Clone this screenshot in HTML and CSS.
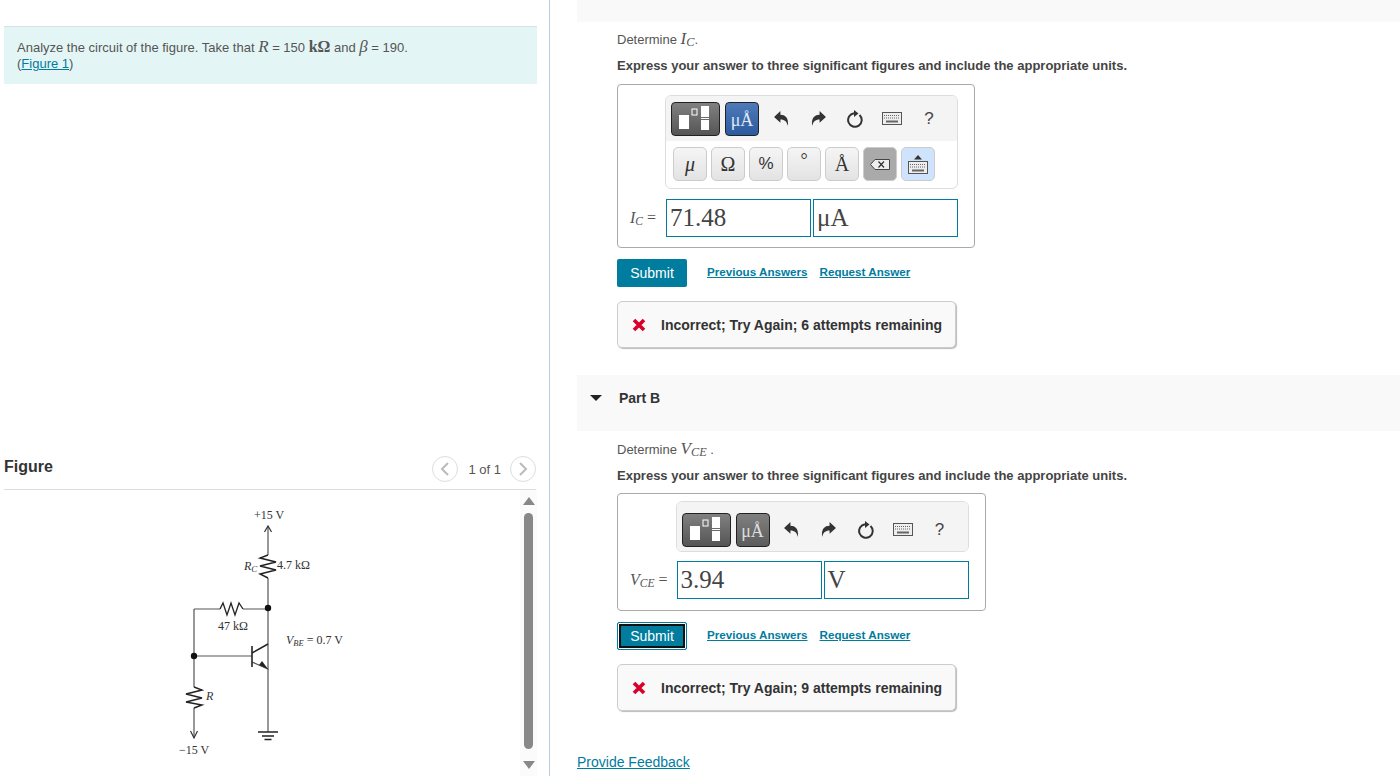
FILE: index.html
```html
<!DOCTYPE html>
<html lang="en">
<head>
  <meta charset="UTF-8" />
  <title>Circuit problem</title>
  <link rel="stylesheet" href="styles.css">
</head>
<body>
  <svg class="defs" width="0" height="0">
    <symbol id="tpl" viewBox="0 0 47 32">
      <rect x="7" y="12" width="10" height="14" fill="#fff"/>
      <rect x="20" y="6" width="5" height="6" fill="none" stroke="#fff"/>
      <rect x="29" y="3" width="8" height="11" fill="#fff"/>
      <rect x="29" y="15" width="8" height="1" fill="#fff"/>
      <rect x="29" y="17" width="8" height="10" fill="#fff"/>
    </symbol>
    <symbol id="undo" viewBox="0 0 16 16">
      <path d="M1 6.500 7 1V4.500C11.500 4.500 15 7.500 14 15C13 11 11 9 7 9V12Z" fill="#333"/>
    </symbol>
    <symbol id="redo" viewBox="0 0 16 16">
      <path d="M15 6.500 9 1V4.500C4.500 4.500 1 7.500 2 15C3 11 5 9 9 9V12Z" fill="#333"/>
    </symbol>
    <symbol id="reset" viewBox="0 0 18 18">
      <path d="M13.500 5A6.800 6.800 0 1 1 8 3.300" fill="none" stroke="#333" stroke-width="2"/>
      <path d="M8 0V7L12.500 3.500Z" fill="#333"/>
    </symbol>
    <symbol id="keyboard" viewBox="0 0 20 13">
      <rect x="0.5" y="0.5" width="19" height="12" fill="#eee" stroke="#555"/>
      <path d="M2 3.500H18M2 6H18" stroke="#666" stroke-dasharray="1 1"/>
      <path d="M4 9.500H16" stroke="#666" stroke-width="2"/>
    </symbol>
    <symbol id="cross" viewBox="0 0 14 14">
      <path d="M2 2 12 12M12 2 2 12" stroke="#d9002a" stroke-width="3.600"/>
    </symbol>
  </svg>

  <div class="left-pane">
    <div class="intro">
      Analyze the circuit of the figure. Take that <i class="math big">R</i> = 150 <span class="math big unit">kΩ</span> and <i class="math big">β</i> = 190.<br>
      (<a href="#">Figure 1</a>)
    </div>

    <div class="figure-head">
      <h3>Figure</h3>
      <div class="pager">
        <span class="circle"><svg width="10" height="14" viewBox="0 0 10 14"><path d="M8 1 2 7l6 6" fill="none" stroke="#bbb" stroke-width="2"/></svg></span>
        <span class="pager-text">1 of 1</span>
        <span class="circle"><svg width="10" height="14" viewBox="0 0 10 14"><path d="M2 1l6 6-6 6" fill="none" stroke="#bbb" stroke-width="2"/></svg></span>
      </div>
    </div>

    <div class="figure-body">
      <svg class="circuit" width="190" height="270" viewBox="170 497 190 270">
        <g fill="none" stroke="#555" stroke-width="1.200">
          <path d="M268 527V555M268 578V669L252 662"/>
          <path d="M268 644 252 653" stroke="#222" stroke-width="1.500"/>
          <path d="M194 656H252M194 609H220M243 609H268M194 609V687M194 708V738M268 669V732"/>
          <path d="M252 646V667" stroke="#222" stroke-width="1.600"/>
          <path d="M264.500 532 268 526 271.500 532M190.500 731 194 738 197.500 731" stroke="#333"/>
          <path d="M268 555 260 558 276 562 260 566 276 570 260 574 268 578" stroke="#222" stroke-width="1.400"/>
          <path d="M194 687 202 690 186 694 202 698 186 702 202 705 194 708" stroke="#222" stroke-width="1.400"/>
          <path d="M220 609 223 603 227 615 231 603 235 615 239 603 243 609" stroke="#222" stroke-width="1.300"/>
          <path d="M258 732H278M262 736H274M264.500 739.500H271.500" stroke="#222" stroke-width="1.500"/>
        </g>
        <path d="M268 669 259 665 262 661Z" fill="#222"/>
        <circle cx="268" cy="608" r="3.200" fill="#111"/>
        <circle cx="194" cy="656" r="3.200" fill="#111"/>
        <g class="circuit-text">
          <text x="254" y="519">+15 V</text>
          <text x="244" y="570" font-style="italic">R<tspan font-size="9" dy="2">C</tspan></text>
          <text x="277" y="569">4.7 kΩ</text>
          <text x="218" y="630">47 kΩ</text>
          <text x="286" y="644" font-style="italic">V<tspan font-size="8.500" dy="2">BE</tspan><tspan dy="-2" font-style="normal"> = 0.7 V</tspan></text>
          <text x="206" y="700" font-style="italic">R</text>
          <text x="179" y="754">−15 V</text>
        </g>
      </svg>
      <div class="scrollbar">
        <span class="arrow-up"></span>
        <span class="thumb"></span>
        <span class="arrow-down"></span>
      </div>
    </div>
  </div>

  <div class="right-pane">
    <div class="band-top"></div>
    <div class="part">
      <p class="prompt">Determine <i class="math big">I<sub>C</sub></i>.</p>
      <p class="instr">Express your answer to three significant figures and include the appropriate units.</p>
      <div class="answer-box">
        <div class="toolbar">
          <div class="tool-row">
            <button class="tpl-btn"><svg width="47" height="32"><use href="#tpl"/></svg></button>
            <button class="unit-btn on">μÅ</button>
            <span class="tool-icon"><svg width="17" height="17"><use href="#undo"/></svg></span>
            <span class="tool-icon"><svg width="17" height="17"><use href="#redo"/></svg></span>
            <span class="tool-icon"><svg width="18" height="18"><use href="#reset"/></svg></span>
            <span class="tool-icon"><svg width="20" height="13"><use href="#keyboard"/></svg></span>
            <span class="tool-icon help">?</span>
          </div>
          <div class="key-row">
            <button class="key"><i>μ</i></button>
            <button class="key">Ω</button>
            <button class="key sans">%</button>
            <button class="key raised">°</button>
            <button class="key">Å</button>
            <button class="key del"><svg width="20" height="11" viewBox="0 0 20 11"><path d="M5 .5H19.500V10.500H5L.5 5.500Z" fill="#eee" stroke="#444"/><path d="M8.500 2.500 14 8.500M14 2.500 8.500 8.500" stroke="#333" stroke-width="1.200"/></svg></button>
            <button class="key kbd"><svg width="20" height="19" viewBox="0 0 20 19"><path d="M6 4.500 10 0l4 4.500Z" fill="#333"/><use href="#keyboard" y="6" width="20" height="13"/></svg></button>
          </div>
        </div>
        <div class="input-row">
          <span class="var"><i>I<sub>C</sub></i> =</span>
          <div class="field">71.48</div>
          <div class="field">μA</div>
        </div>
      </div>
      <div class="actions">
        <button class="submit">Submit</button>
        <a href="#">Previous Answers</a>
        <a href="#">Request Answer</a>
      </div>
      <div class="feedback">
        <svg width="14" height="14"><use href="#cross"/></svg>
        <span>Incorrect; Try Again; 6 attempts remaining</span>
      </div>
    </div>

    <div class="band-part">
      <span class="caret"></span>
      <span class="part-title">Part B</span>
    </div>
    <div class="part part-b">
      <p class="prompt">Determine <i class="math big">V<sub>CE</sub></i> .</p>
      <p class="instr">Express your answer to three significant figures and include the appropriate units.</p>
      <div class="answer-box">
        <div class="toolbar single">
          <div class="tool-row">
            <button class="tpl-btn"><svg width="47" height="32"><use href="#tpl"/></svg></button>
            <button class="unit-btn">μÅ</button>
            <span class="tool-icon"><svg width="17" height="17"><use href="#undo"/></svg></span>
            <span class="tool-icon"><svg width="17" height="17"><use href="#redo"/></svg></span>
            <span class="tool-icon"><svg width="18" height="18"><use href="#reset"/></svg></span>
            <span class="tool-icon"><svg width="20" height="13"><use href="#keyboard"/></svg></span>
            <span class="tool-icon help">?</span>
          </div>
        </div>
        <div class="input-row">
          <span class="var"><i>V<sub>CE</sub></i> =</span>
          <div class="field">3.94</div>
          <div class="field">V</div>
        </div>
      </div>
      <div class="actions">
        <button class="submit focus">Submit</button>
        <a href="#">Previous Answers</a>
        <a href="#">Request Answer</a>
      </div>
      <div class="feedback">
        <svg width="14" height="14"><use href="#cross"/></svg>
        <span>Incorrect; Try Again; 9 attempts remaining</span>
      </div>
    </div>
    <a class="provide" href="#">Provide Feedback</a>
  </div>
</body>
</html>
```

FILE: styles.css
```css
body {
  font-family: "Liberation Sans", Arial, sans-serif;
  font-size: 13px;
  color: #555;
  background-color: #fff;
  display: flex;
  height: 776px;
  margin: 0;
  overflow: hidden;
}
a {
  color: #007c9e;
  text-decoration: underline;
}
p {
  margin: 0;
}
.defs {
  position: absolute;
}
.math {
  font-family: "Liberation Serif", serif;
}
.big {
  font-size: 17px;
  line-height: 12px;
}
.unit {
  font-weight: bold;
  font-size: 16px;
}
.big sub, .var sub {
  font-size: 0.72em;
  line-height: 0;
  vertical-align: -0.2em;
}

/* left column */
.left-pane {
  width: 549px;
  flex-shrink: 0;
  border-right: 1px solid #b9cde0;
  padding-top: 26px;
}
.intro {
  margin-left: 4px;
  width: 533px;
  height: 58px;
  padding: 13px 0 0 13px;
  box-sizing: border-box;
  background-color: #e4f5f6;
  border-top: 1px solid #d5e3e8;
  line-height: 16px;
}
.figure-head {
  display: flex;
  justify-content: space-between;
  align-items: center;
  margin: 368px 13px 0 4px;
  height: 38px;
  padding-bottom: 6px;
  box-sizing: border-box;
  border-bottom: 1px solid #ddd;
}
.figure-head h3 {
  margin: -2px 0 0;
  font-size: 16px;
  color: #333;
}
.pager {
  display: flex;
  align-items: center;
  gap: 10px;
  margin-top: 2px;
  font-size: 13px;
  color: #555;
}
.pager-text {
  margin-right: -1px;
  padding-top: 2px;
}
.circle {
  width: 24px;
  height: 24px;
  border: 1px solid #ddd;
  border-radius: 50%;
  display: flex;
  align-items: center;
  justify-content: center;
}
.figure-body {
  position: relative;
  height: 286px;
}
.circuit {
  position: absolute;
  left: 170px;
  top: 7px;
}
.circuit-text {
  font-family: "Liberation Serif", serif;
  font-size: 12px;
  fill: #333;
}
.scrollbar {
  position: absolute;
  left: 520px;
  top: 0;
  width: 17px;
  height: 100%;
  background-color: #fbfbfb;
  display: flex;
  flex-direction: column;
  align-items: center;
  padding-top: 7px;
  box-sizing: border-box;
}
.arrow-up {
  border: 6px solid transparent;
  border-top: 0;
  border-bottom: 8px solid #888;
}
.thumb {
  width: 9px;
  height: 236px;
  margin: 8px 0 12px;
  border-radius: 5px;
  background-color: #888;
}
.arrow-down {
  border: 6px solid transparent;
  border-bottom: 0;
  border-top: 8px solid #888;
}

/* right column */
.right-pane {
  flex: 1;
  padding-left: 27px;
}
.band-top {
  height: 22px;
  background-color: #f9f9f9;
}
.part {
  padding-left: 40px;
}
.prompt {
  height: 18px;
  line-height: 18px;
  margin-top: 9px;
}
.instr {
  margin-top: 8px;
  height: 18px;
  line-height: 18px;
  font-size: 13px;
  font-weight: bold;
  color: #444;
}
.answer-box {
  display: flex;
  flex-direction: column;
  width: fit-content;
  margin-top: 9px;
  padding: 10px 16px 10px 12px;
  border: 1px solid #aaa;
  border-radius: 4px;
}
.toolbar {
  align-self: flex-end;
  width: 293px;
  box-sizing: border-box;
  height: 94px;
  border: 1px solid #ddd;
  border-radius: 6px;
  overflow: hidden;
}
.toolbar.single {
  height: 51px;
  background-color: #f4f4f4;
}
.tool-row {
  display: flex;
  align-items: center;
  gap: 5px;
  height: 45px;
  padding: 0 5px;
  background-color: #f4f4f4;
}
.single .tool-row {
  padding-top: 5px;
}
.tool-row button {
  padding: 0;
  height: 34px;
  border: 1px solid #222;
  border-radius: 4px;
}
.tpl-btn {
  width: 49px;
  background: linear-gradient(#808080, #555);
  display: flex;
  align-items: center;
  justify-content: center;
}
.tool-row .unit-btn {
  width: 34px;
  margin-right: 1px;
  padding-top: 4px;
  background: linear-gradient(#808080, #5c5c5c);
  color: #ddd;
  font-family: "Liberation Serif", serif;
  font-size: 18px;
}
.tool-row .unit-btn.on {
  background: linear-gradient(#4e7ab9, #2c5a9f);
  color: #dfe8f5;
}
.tool-icon {
  width: 32px;
  display: flex;
  align-items: center;
  justify-content: center;
}
.help {
  padding-top: 1px;
  font-size: 17px;
  color: #444;
}
.key-row {
  display: flex;
  gap: 4px;
  padding: 6px 7px 0;
}
.key {
  width: 34px;
  height: 34px;
  padding: 0;
  border: 1px solid #ccc;
  border-radius: 5px;
  background: linear-gradient(#f5f5f5, #e3e3e3);
  color: #333;
  font-family: "Liberation Serif", serif;
  font-size: 20px;
  display: flex;
  align-items: center;
  justify-content: center;
}
.key.sans {
  font-family: "Liberation Sans", sans-serif;
  font-size: 17px;
}
.key.raised {
  align-items: flex-start;
  padding-top: 2px;
  font-size: 18px;
}
.key.del {
  background: #aaa;
}
.key.kbd {
  background: #cfe4fc;
}
.input-row {
  display: flex;
  align-items: center;
  margin-top: 10px;
}
.var {
  font-family: "Liberation Serif", serif;
  font-size: 16px;
  margin-right: 10px;
}
.field {
  width: 145px;
  height: 38px;
  margin-right: 2px;
  padding-left: 3px;
  box-sizing: border-box;
  border: 1px solid #007c9e;
  font-family: "Liberation Serif", serif;
  font-size: 25px;
  line-height: 35px;
  color: #444;
}
.field:last-child {
  margin-right: 0;
}
.actions {
  display: flex;
  align-items: center;
  gap: 12px;
  margin-top: 11px;
  font-size: 11.650px;
  font-weight: bold;
}
.actions a {
  margin-bottom: 4px;
}
.submit {
  width: 70px;
  height: 28px;
  margin-right: 8px;
  padding: 0;
  border: none;
  border-radius: 2px;
  background-color: #007c9e;
  color: #fff;
  font-family: "Liberation Sans", sans-serif;
  font-size: 14px;
}
.submit.focus {
  border: 1px solid #007c9e;
  box-shadow: inset 0 0 0 1px #fff, inset 0 0 0 3px #111;
}
.feedback {
  display: flex;
  align-items: center;
  gap: 15px;
  width: 339px;
  height: 47px;
  margin-top: 14px;
  padding-left: 14px;
  box-sizing: border-box;
  border: 1px solid #ccc;
  border-radius: 5px;
  background-color: #f9f9f9;
  box-shadow: 1px 1px 1px #bbb;
  font-size: 14px;
  font-weight: bold;
  color: #333;
}
.band-part {
  display: flex;
  align-items: center;
  height: 56px;
  margin-top: 27px;
  padding: 0 0 10px 13px;
  box-sizing: border-box;
  background-color: #f9f9f9;
}
.caret {
  border: 6px solid transparent;
  border-bottom: 0;
  border-top: 6px solid #222;
}
.part-title {
  margin-left: 17px;
  font-size: 14px;
  font-weight: bold;
  color: #333;
}
.part-b .prompt {
  margin-top: 10px;
}
.part-b .answer-box {
  margin-top: 8px;
  padding: 7px 16px 11px 12px;
}
.part-b .input-row {
  margin-top: 9px;
}
.part-b .var {
  margin-right: 9px;
}
.provide {
  display: block;
  margin-top: 43px;
  font-size: 14px;
}
```
